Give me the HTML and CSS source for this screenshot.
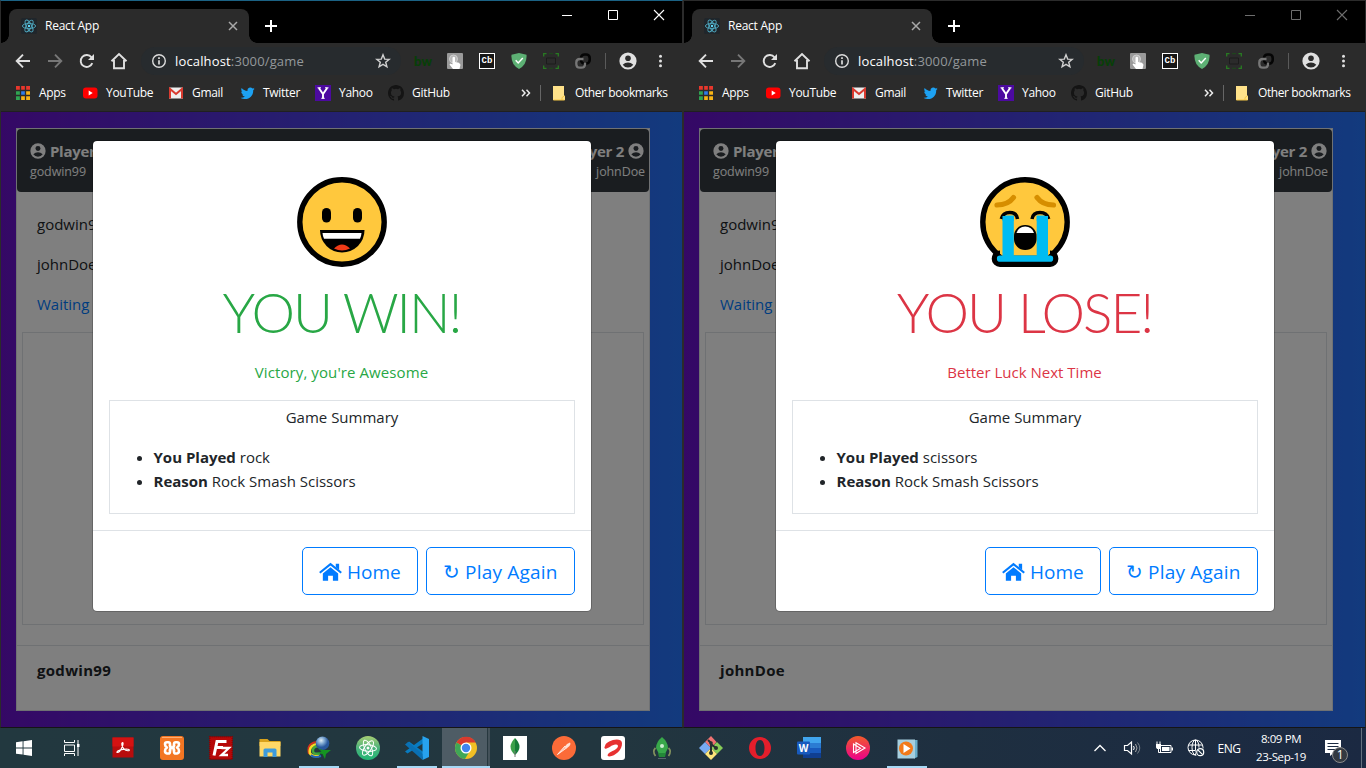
FILE: index.html
```html
<!DOCTYPE html>
<html lang="en">
<head>
<meta charset="utf-8">
<title>React App</title>
<link rel="stylesheet" href="styles.css">
</head>
<body>
<svg class="defs" aria-hidden="true">
  <defs>
    <symbol id="react" viewBox="0 0 16 16"><rect width="16" height="16" rx="1.5" fill="#20262b"/><g fill="none" stroke="#4fa9c0" stroke-width=".9"><ellipse cx="8" cy="8" rx="6.6" ry="2.6"/><ellipse cx="8" cy="8" rx="6.6" ry="2.6" transform="rotate(60 8 8)"/><ellipse cx="8" cy="8" rx="6.6" ry="2.6" transform="rotate(120 8 8)"/></g><circle cx="8" cy="8" r="1.2" fill="#61dafb"/></symbol>
    <symbol id="tabx" viewBox="0 0 16 16"><path d="M4 4l8 8M12 4l-8 8" stroke="#a8a8a8" stroke-width="1.5"/></symbol>
    <symbol id="plus" viewBox="0 0 16 16"><path d="M8 2v12M2 8h12" stroke="#fff" stroke-width="2"/></symbol>
    <symbol id="min" viewBox="0 0 16 16"><path d="M3 8.5h10" stroke="currentColor"/></symbol>
    <symbol id="max" viewBox="0 0 16 16"><path d="M3.5 3.500h9v9h-9z" fill="none" stroke="currentColor"/></symbol>
    <symbol id="close" viewBox="0 0 16 16"><path d="M3 3l10 10M13 3L3 13" stroke="currentColor" stroke-width="1.1"/></symbol>
    <symbol id="back" viewBox="0 0 16 16"><path d="M15 8H2M8 1.700L1.700 8 8 14.300" fill="none" stroke="currentColor" stroke-width="1.9"/></symbol>
    <symbol id="reload" viewBox="0 0 16 16"><path d="M13.300 10.200A6 6 0 1 1 12.500 4.300" fill="none" stroke="#e0e0e0" stroke-width="1.900"/><path d="M15 1v6H9z" fill="#e0e0e0"/></symbol>
    <symbol id="homeo" viewBox="0 0 18 18"><path d="M1.500 9.200L9 2l7.500 7.200M4 8v8.200h10V8" fill="none" stroke="#e0e0e0" stroke-width="1.900"/></symbol>
    <symbol id="info" viewBox="0 0 16 16"><circle cx="8" cy="8" r="6.300" fill="none" stroke="#dcdcdc" stroke-width="1.400"/><path d="M8 7.200v4.300M8 4.200v1.700" stroke="#dcdcdc" stroke-width="1.700"/></symbol>
    <symbol id="star" viewBox="0 0 16 16"><path d="M8 1.800l1.700 4.300 4.500.3-3.500 2.900 1.200 4.500L8 11.300l-3.900 2.500 1.200-4.500L1.800 6.400l4.500-.3z" fill="none" stroke="#d0d0d0" stroke-width="1.400"/></symbol>
    <symbol id="touch" viewBox="0 0 16 16"><rect width="16" height="16" rx="1" fill="#9a9a9a"/><circle cx="6.500" cy="6" r="4" fill="#b9b9b9" stroke="#cfcfcf"/><path d="M5.500 4.500q1.500-1.500 2.500 0V9l4 .8 1.500 2-1 4.200H6L2.500 11.500l1-1 2 1z" fill="#fff"/></symbol>
    <symbol id="shield" viewBox="0 0 16 16"><path d="M8 0l7.500 1.800q.8 9.500-7.500 14.200Q-.3 11.300.5 1.800z" fill="#5db074"/><path d="M4.700 7.200l2.500 2.700L11.800 5" fill="none" stroke="#fff" stroke-width="1.500"/></symbol>
    <symbol id="capture" viewBox="0 0 16 16"><path d="M.7 3.500V.7h2.800M12.500 .7h2.800v2.800M15.300 12.500v2.800h-2.800M3.500 15.300H.7v-2.800" fill="none" stroke="#287b22" stroke-width="1.300"/><path d="M6 .7h4M6 15.300h4" stroke="#1d4a1b" stroke-width="1"/><path d="M3.500 5h9v6h-9z" fill="none" stroke="#1c1c1c"/></symbol>
    <symbol id="link" viewBox="0 0 16 16"><rect x="6" y="1.500" width="8.700" height="9" rx="3.500" fill="none" stroke="#050505" stroke-width="2.600"/><path d="M10 9.500v1.500q0 3.700-3.700 3.700H5Q1.300 14.700 1.300 11V9.500Q1.300 6 5 6h3.500" fill="none" stroke="#777" stroke-width="2.300"/></symbol>
    <symbol id="avatar" viewBox="0 0 18 18"><circle cx="9" cy="9" r="8.600" fill="currentColor"/><circle cx="9" cy="6.200" r="2.800" class="hole"/><path d="M3.700 12.700Q6 10.400 9 10.400t5.300 2.300Q12.500 15.500 9 15.500t-5.300-2.800z" class="hole"/></symbol>
    <symbol id="dots" viewBox="0 0 16 16"><g fill="#e0e0e0"><circle cx="8.500" cy="3.200" r="1.500"/><circle cx="8.500" cy="8" r="1.500"/><circle cx="8.500" cy="12.800" r="1.500"/></g></symbol>
    <symbol id="apps" viewBox="0 0 16 16"><path d="M0 1h4v4H0zM5 1h4v4H5zM10 1h4v4h-4z" fill="#e8372c"/><path d="M0 6h4v4H0zM0 11h4v4H0z" fill="#2fa552"/><path d="M5 6h4v4H5z" fill="#2f7de8"/><path d="M10 6h4v4h-4zM5 11h4v4H5zM10 11h4v4h-4z" fill="#f8b516"/><path d="M4.500 1v14M9.500 1v14M0 5.500h14M0 10.500h14" stroke="#2b2b2b" stroke-width="1.300"/></symbol>
    <symbol id="youtube" viewBox="0 0 16 16"><rect y="2.500" width="14.500" height="11" rx="3" fill="#f00"/><path d="M5.700 5.500v5l4-2.500z" fill="#fff"/></symbol>
    <symbol id="gmail" viewBox="0 0 16 16"><path d="M0 2.500h14v11H0z" fill="#eee"/><path d="M1 13.500V4l6 5 6-5v9.500" fill="none" stroke="#d93a2f" stroke-width="2"/></symbol>
    <symbol id="twitter" viewBox="0 0 24 24"><path d="M22 5.800c-.8.300-1.600.6-2.500.7.900-.5 1.600-1.400 1.900-2.400-.8.500-1.800.9-2.700 1.100A4.300 4.300 0 0 0 11.300 9C7.700 8.900 4.600 7.200 2.500 4.600c-1.200 2-.5 4.500 1.300 5.700-.7 0-1.400-.2-2-.5 0 2.200 1.500 3.900 3.500 4.300-.6.200-1.300.2-2 .1.600 1.700 2.200 2.900 4 3A8.700 8.700 0 0 1 .9 19c9 5.600 19.300-.5 18.900-11 .9-.6 1.600-1.400 2.200-2.200z" fill="#1da1f2"/></symbol>
    <symbol id="yahoo" viewBox="0 0 16 16"><rect width="16" height="16" fill="#4c0aa0"/><path d="M3.800 3L8 9l4.200-6M8 9v4.500" fill="none" stroke="#fff" stroke-width="1.900"/><path d="M2.500 2.800h3.500M10 2.800h3.500M6.300 13.300h3.400" stroke="#fff"/></symbol>
    <symbol id="github" viewBox="0 0 16 16"><path d="M8 0C3.580 0 0 3.580 0 8c0 3.540 2.290 6.530 5.470 7.590.4.070.55-.17.55-.38v-1.490c-2.010.37-2.530-.49-2.690-.94-.09-.23-.48-.94-.82-1.130-.28-.15-.68-.52-.01-.53.63-.01 1.080.58 1.230.82.72 1.210 1.870.87 2.330.66.07-.52.280-.87.510-1.070-1.780-.2-3.640-.89-3.640-3.950 0-.87.310-1.590.820-2.150-.08-.2-.36-1.020.080-2.120 0 0 .67-.21 2.200.82a7.600 7.600 0 0 1 4 0c1.530-1.040 2.200-.82 2.200-.82.440 1.100.160 1.920.080 2.120.510.560.820 1.270.820 2.150 0 3.070-1.870 3.750-3.650 3.950.290.250.540.730.540 1.480v2.200c0 .210.150.460.550.380A8 8 0 0 0 16 8c0-4.420-3.580-8-8-8z" fill="#141414"/></symbol>
    <symbol id="more" viewBox="0 0 16 16"><path d="M4 4.800l3 3.200-3 3.200M8.500 4.800l3 3.200-3 3.200" fill="none" stroke="#ececec" stroke-width="1.500"/></symbol>
    <symbol id="folder" viewBox="0 0 16 16"><path d="M0 1h11v9.500l1 .5v4H0z" fill="#ffe28a"/><path d="M.4 15h11.200M9 15v-2.500l2.500-1.500" stroke="#f6c744" fill="none"/></symbol>
    <symbol id="fahome" viewBox="0 0 24 20"><path d="M4 11.500L12 5l8 6.500V19h-5.500v-5h-5v5H4z" fill="currentColor"/><path d="M.8 10.800L12 1.800l11.200 9" fill="none" stroke="currentColor" stroke-width="2.200"/><path d="M17.500 1.500H21V8l-3.500-3z" fill="currentColor"/></symbol>
    <symbol id="happy" viewBox="0 0 90 90"><circle cx="45" cy="45" r="42.200" fill="#ffc83d" stroke="#000" stroke-width="5.400"/><rect x="25" y="31" width="9" height="14.500" rx="4.500"/><rect x="56" y="31" width="9" height="14.500" rx="4.500"/><path d="M23 53h44.500q0 9-6.500 16-7 6.500-16 6.500T29.500 69Q23 62 23 53z"/><path d="M25.500 56h39q-.3 3.400-1.500 5.800H27q-1.200-2.400-1.500-5.800z" fill="#fff"/><path d="M37 71.500q8-8 16 0-8 4-16 0z" fill="#f03a17"/></symbol>
    <symbol id="sad" viewBox="0 0 90 90"><circle cx="45" cy="45" r="42.200" fill="#ffc83d" stroke="#000" stroke-width="5.400"/><rect x="14.300" y="76" width="61.500" height="11.400" rx="5.700" fill="#00bcf2" stroke="#000" stroke-width="5.200"/><path d="M20 72h50v4.500l-2 2H22l-2-2z" fill="#ffc83d"/><path d="M22.500 38.500h11.300V78.500h22.900V38.500h11.300V79h2.500a2.500 2.500 0 0 1 0 5H19.500a2.500 2.500 0 0 1 0-5h3z" fill="#00bcf2"/><path d="M17 28q11 0 16.500-7.500M73.500 28Q62.500 28 57 20.500" fill="none" stroke="#d68e00" stroke-width="5.200" stroke-linecap="round"/><path d="M21.300 42q1.500-6.500 8.500-6.500T37.500 42M52 42q1-6.500 8-6.500t8.700 6.500" fill="none" stroke="#000" stroke-width="3.500"/><path d="M22.500 39h11.300v5H22.500zM56.700 39H68v5H56.700z" fill="#00bcf2"/><rect x="34" y="48" width="22.500" height="25" rx="11"/><path d="M36.500 56q2-6.500 8.700-6.500T54 56z" fill="#fff"/></symbol>
  </defs>
</svg>
<div class="desktop">
  <main class="windows">
    <section class="window active">
      <header class="titlebar">
        <div class="tab"><svg class="i16"><use href="#react"/></svg><span class="tab-name">React App</span><svg class="i16"><use href="#tabx"/></svg></div>
        <svg class="i16 newtab"><use href="#plus"/></svg>
        <div class="controls"><svg class="i16"><use href="#min"/></svg><svg class="i16"><use href="#max"/></svg><svg class="i16"><use href="#close"/></svg></div>
      </header>
      <nav class="toolbar">
        <span class="tool"><svg class="i16"><use href="#back"/></svg></span><span class="tool forward"><svg class="i16"><use href="#back"/></svg></span><span class="tool"><svg class="i16"><use href="#reload"/></svg></span><span class="tool"><svg class="i18"><use href="#homeo"/></svg></span>
        <div class="omnibox"><svg class="i16"><use href="#info"/></svg><span class="url">localhost<i>:3000/game</i></span><svg class="i16"><use href="#star"/></svg></div>
        <span class="tool bw">bw</span><span class="tool"><svg class="i16"><use href="#touch"/></svg></span><span class="tool cb">Cb</span><span class="tool"><svg class="i16"><use href="#shield"/></svg></span><span class="tool"><svg class="i16"><use href="#capture"/></svg></span><span class="tool"><svg class="i16"><use href="#link"/></svg></span>
        <span class="rule"></span><span class="tool profile"><svg class="i18"><use href="#avatar"/></svg></span><span class="tool"><svg class="i16"><use href="#dots"/></svg></span>
      </nav>
      <nav class="bookmarks">
        <span class="bm"><svg class="i16"><use href="#apps"/></svg>Apps</span><span class="bm"><svg class="i16"><use href="#youtube"/></svg>YouTube</span><span class="bm"><svg class="i16"><use href="#gmail"/></svg>Gmail</span><span class="bm"><svg class="i16"><use href="#twitter"/></svg>Twitter</span><span class="bm"><svg class="i16"><use href="#yahoo"/></svg>Yahoo</span><span class="bm"><svg class="i16"><use href="#github"/></svg>GitHub</span><span class="bm more"><svg class="i16"><use href="#more"/></svg></span><span class="bm other"><svg class="i16"><use href="#folder"/></svg>Other bookmarks</span>
      </nav>
      <div class="page">
        <div class="game">
          <div class="players"><div class="player"><b><svg class="i16"><use href="#avatar"/></svg> Player 1</b><small>godwin99</small></div><div class="player second"><b>Player 2 <svg class="i16"><use href="#avatar"/></svg></b><small>johnDoe</small></div></div>
          <div class="log"><p>godwin99</p><p>johnDoe</p><p class="wait">Waiting</p></div>
          <div class="board"></div>
          <footer class="me">godwin99</footer>
        </div>
        <div class="backdrop">
          <div class="modal win">
            <div class="modal-body"><svg class="face"><use href="#happy"/></svg><h1>YOU WIN!</h1><p class="verdict">Victory, you're Awesome</p>
              <div class="summary"><p>Game Summary</p><ul><li><b>You Played</b> rock</li><li><b>Reason</b> Rock Smash Scissors</li></ul></div></div>
            <div class="modal-footer"><button class="btn home"><svg class="house"><use href="#fahome"/></svg>Home</button><button class="btn again"><span class="turn">↻</span>Play Again</button></div>
          </div>
        </div>
      </div>
    </section>
    <section class="window">
      <header class="titlebar">
        <div class="tab"><svg class="i16"><use href="#react"/></svg><span class="tab-name">React App</span><svg class="i16"><use href="#tabx"/></svg></div>
        <svg class="i16 newtab"><use href="#plus"/></svg>
        <div class="controls"><svg class="i16"><use href="#min"/></svg><svg class="i16"><use href="#max"/></svg><svg class="i16"><use href="#close"/></svg></div>
      </header>
      <nav class="toolbar">
        <span class="tool"><svg class="i16"><use href="#back"/></svg></span><span class="tool forward"><svg class="i16"><use href="#back"/></svg></span><span class="tool"><svg class="i16"><use href="#reload"/></svg></span><span class="tool"><svg class="i18"><use href="#homeo"/></svg></span>
        <div class="omnibox"><svg class="i16"><use href="#info"/></svg><span class="url">localhost<i>:3000/game</i></span><svg class="i16"><use href="#star"/></svg></div>
        <span class="tool bw">bw</span><span class="tool"><svg class="i16"><use href="#touch"/></svg></span><span class="tool cb">Cb</span><span class="tool"><svg class="i16"><use href="#shield"/></svg></span><span class="tool"><svg class="i16"><use href="#capture"/></svg></span><span class="tool"><svg class="i16"><use href="#link"/></svg></span>
        <span class="rule"></span><span class="tool profile"><svg class="i18"><use href="#avatar"/></svg></span><span class="tool"><svg class="i16"><use href="#dots"/></svg></span>
      </nav>
      <nav class="bookmarks">
        <span class="bm"><svg class="i16"><use href="#apps"/></svg>Apps</span><span class="bm"><svg class="i16"><use href="#youtube"/></svg>YouTube</span><span class="bm"><svg class="i16"><use href="#gmail"/></svg>Gmail</span><span class="bm"><svg class="i16"><use href="#twitter"/></svg>Twitter</span><span class="bm"><svg class="i16"><use href="#yahoo"/></svg>Yahoo</span><span class="bm"><svg class="i16"><use href="#github"/></svg>GitHub</span><span class="bm more"><svg class="i16"><use href="#more"/></svg></span><span class="bm other"><svg class="i16"><use href="#folder"/></svg>Other bookmarks</span>
      </nav>
      <div class="page">
        <div class="game">
          <div class="players"><div class="player"><b><svg class="i16"><use href="#avatar"/></svg> Player 1</b><small>godwin99</small></div><div class="player second"><b>Player 2 <svg class="i16"><use href="#avatar"/></svg></b><small>johnDoe</small></div></div>
          <div class="log"><p>godwin99</p><p>johnDoe</p><p class="wait">Waiting</p></div>
          <div class="board"></div>
          <footer class="me">johnDoe</footer>
        </div>
        <div class="backdrop">
          <div class="modal lose">
            <div class="modal-body"><svg class="face"><use href="#sad"/></svg><h1>YOU LOSE!</h1><p class="verdict">Better Luck Next Time</p>
              <div class="summary"><p>Game Summary</p><ul><li><b>You Played</b> scissors</li><li><b>Reason</b> Rock Smash Scissors</li></ul></div></div>
            <div class="modal-footer"><button class="btn home"><svg class="house"><use href="#fahome"/></svg>Home</button><button class="btn again"><span class="turn">↻</span>Play Again</button></div>
          </div>
        </div>
      </div>
    </section>
  </main>
  <footer class="taskbar">
    <span class="start"><svg class="i16" viewBox="0 0 16 16"><path d="M0 2.200l6.600-.9v6.200H0zM7.500 1.200L16 0v7.500H7.500zM0 8.400h6.600v6.200L0 13.700zM7.500 8.400H16V16l-8.500-1.200z" fill="#fff"/></svg></span>
    <span class="taskview"><svg class="i16" viewBox="0 0 16 16"><path d="M.5 0v2.500h10V0M.5 5h10v6.500H.500zM.5 16v-2.500h10V16M14 0v16" fill="none" stroke="#fff"/><path d="M13 4h2.500v3H13z" fill="#fff"/></svg></span>
    <span class="app"><svg class="i24" viewBox="0 0 24 24"><rect x="1.500" y="1.500" width="21" height="20" fill="#b80d0d"/><path d="M1.500 1.500h21v9h-21z" fill="#d41212"/><path d="M6 16.500c-.5-2 9-4.500 12-3 1.500 2-3 1.500-5-.5s-3-6-1.500-6.500c2 0-2 10.500-5.500 10z" fill="none" stroke="#fff" stroke-width="1.200"/></svg></span>
    <span class="app"><svg class="i24" viewBox="0 0 24 24"><rect width="24" height="24" rx="3" fill="#f37623"/><path d="M2 1.500h20" stroke="#ffae72"/><g fill="none" stroke="#fff" stroke-width="2.600" stroke-linejoin="round" stroke-linecap="round"><path d="M10 9.500V8Q10 6.300 8.300 6.300H7Q5 6.300 5 8.300t2 3.200Q5 12.800 5 15t2 2.500h1.300q1.700 0 1.700-1.800v-1.500"/><path d="M14 9.500V8q0-1.700 1.700-1.700H17q2 0 2 2t-2 3.200q2 1.300 2 3.500t-2 2.500h-1.300q-1.700 0-1.700-1.800v-1.500"/><path d="M10 9.500q0 2 2 2t2-2M10 14.200q0-2.200 2-2.200t2 2.200"/></g></svg></span>
    <span class="app"><svg class="i24" viewBox="0 0 24 24"><rect x=".7" y=".7" width="22.600" height="22.600" fill="#b60808" stroke="#8a0000" stroke-width="1.400" stroke-dasharray="1 1"/><path d="M5 19.500L8 5.500h9.500M7 11.500h7" fill="none" stroke="#fff" stroke-width="3"/><path d="M12.500 12H20L12.500 19H19" fill="none" stroke="#fff" stroke-width="2.300"/></svg></span>
    <span class="app"><svg class="i24" viewBox="0 0 24 24"><path d="M1.500 3h8l2 2h11v5h-21z" fill="#d9a21b"/><path d="M1.500 6h21v14.500h-21z" fill="#ffd867"/><path d="M5.500 21v-7q0-1.500 1.500-1.500h10q1.500 0 1.500 1.500v7h-4v-4.500h-5V21z" fill="#3d9bdc"/></svg></span>
    <span class="app open"><svg class="i24" viewBox="0 0 24 24"><defs><radialGradient id="globe" cx=".4" cy=".3"><stop stop-color="#e2eef5"/><stop offset=".5" stop-color="#7ca6d0"/><stop offset="1" stop-color="#28579c"/></radialGradient></defs><g fill="none"><path d="M2 18Q-1 6 12 6" stroke="#d4331c" stroke-width="2"/><path d="M12 20Q0 21 3.500 12 6 8 12 8" stroke="#f4dc28" stroke-width="2.500"/><path d="M13 17.500Q5 19 6 13.500 7 10 12 10" stroke="#42a63c" stroke-width="2.500"/><path d="M4 19q3 3.500 10 1" stroke="#2365b6" stroke-width="2"/></g><circle cx="15.500" cy="7.200" r="6.800" fill="url(#globe)"/><path d="M11 12.500l5 1.500h8l-5 4-1 5-2.500-5-6-1 5-1.500z" fill="#159421"/></svg></span>
    <span class="app"><svg class="i24" viewBox="0 0 24 24"><defs><linearGradient id="atom" x2="0" y2="1"><stop stop-color="#a8cf74"/><stop offset=".5" stop-color="#4cb37c"/><stop offset="1" stop-color="#20b573"/></linearGradient></defs><circle cx="12" cy="12" r="12" fill="url(#atom)"/><g fill="none" stroke="#fff"><ellipse cx="12" cy="12" rx="8.500" ry="3.300" transform="rotate(5 12 12)"/><ellipse cx="12" cy="12" rx="8.500" ry="3.300" transform="rotate(65 12 12)"/><ellipse cx="12" cy="12" rx="8.500" ry="3.300" transform="rotate(125 12 12)"/></g><circle cx="12" cy="12" r="1.500" fill="#fff"/></svg></span>
    <span class="app open"><svg class="i24" viewBox="0 0 24 24"><path d="M2 7.500L18 21l.5-5L4 5.500zM0 15.500l2.500 2L18 7.500V2.500z" fill="#087bc0"/><path d="M17.500 0L24 3v18l-6.500 3z" fill="#27a3ef"/><path d="M0 8.500l3-2.500 14.500 12V24z" fill="#0a70b3"/></svg></span>
    <span class="app current"><svg class="i24" viewBox="0 0 24 24"><circle cx="12" cy="12" r="11" fill="#f2bf24"/><path d="M12 12L2.500 6.500a11 11 0 0 1 19.300 0H12z" fill="#d93a2e"/><path d="M12 12L2.500 6.500A11 11 0 0 0 11 23l5-8.500z" fill="#3fa757"/><circle cx="12" cy="12" r="5.500" fill="#fff"/><circle cx="12" cy="12" r="4.200" fill="#4185ef"/></svg></span>
    <span class="app"><svg class="i24" viewBox="0 0 24 24"><path d="M0 0h24v24H0z" fill="#fff"/><path d="M12 2q-9 9 0 17z" fill="#3aa04a"/><path d="M12 2q9 9 0 17z" fill="#157c38"/><path d="M12 15v6" stroke="#777"/></svg></span>
    <span class="app"><svg class="i24" viewBox="0 0 24 24"><circle cx="12" cy="12" r="12" fill="#fb6b38"/><path d="M5.500 18.500L13 10l1.800 1.800z" fill="#ffb89c" stroke="#fff" stroke-width=".8"/><path d="M12.500 11l2.500-3 2-1 1-.5.500 1.500-1 2-3 2.500z" fill="#ffe2d6"/></svg></span>
    <span class="app"><svg class="i24" viewBox="0 0 24 24"><rect width="24" height="24" rx="3" fill="#fff"/><path d="M4 10C4.500 5 20 0 21 7c.5 7-7 13-12.500 13.500-4-.5-1-4 3-5.500 5-2 7.500-6 3.500-6.500C11 8 6 14 4 12.500 3 12 3.500 11 4 10z" fill="#e73131"/></svg></span>
    <span class="app"><svg class="i24" viewBox="0 0 24 24"><path d="M5.500 12Q2 15 5.500 20M18.500 12q3.500 3 0 8" fill="none" stroke="#83925e" stroke-width="1.700"/><path d="M12 1q-6 5-6 11l3 6h6l3-6q0-6-6-11z" fill="#38a84a"/><path d="M8 17h8l-1 4H9z" fill="#238738"/><circle cx="12" cy="10" r="2" fill="#cbeed0"/><path d="M8 22.500h8" stroke="#56666b"/></svg></span>
    <span class="app"><svg class="i24" viewBox="0 0 24 24"><path d="M12 0l5.500 6-5.500 6-6-6z" fill="#f07272"/><path d="M18 6l6 6-6 6-6-6z" fill="#86cc58"/><path d="M6 6l6 6-6 6-6-6z" fill="#77aaf2"/><path d="M12 12l6 6-6 6-6-6z" fill="#ffe57b"/><path d="M9 4l3 3v11M12 8l5 4" fill="none" stroke="#26302f" stroke-width="2"/><circle cx="12" cy="7" r="1.800" fill="#26302f"/><circle cx="17" cy="12" r="2" fill="#26302f"/><circle cx="12" cy="17" r="2" fill="#26302f"/></svg></span>
    <span class="app"><svg class="i24" viewBox="0 0 24 24"><path fill-rule="evenodd" d="M12 1a11 11 0 1 0 0 22 11 11 0 0 0 0-22zm0 3c3 0 4.500 3.500 4.500 8s-1.500 8-4.500 8-4.500-3.500-4.500-8 1.500-8 4.500-8z" fill="#e41e2b"/></svg></span>
    <span class="app word"><svg class="i24" viewBox="0 0 24 24"><path d="M6 1h18v7H6z" fill="#41a5ee"/><path d="M6 7h18v5H6z" fill="#2b7cd3"/><path d="M6 12h18v5H6z" fill="#185abd"/><path d="M6 17h18v5H6z" fill="#103f91"/><rect y="5.500" width="13" height="13" rx="1" fill="#185abd"/><text x="6.500" y="16" text-anchor="middle">W</text></svg></span>
    <span class="app"><svg class="i24" viewBox="0 0 24 24"><defs><linearGradient id="ps" x2="0" y2="1"><stop stop-color="#f15b2a"/><stop offset="1" stop-color="#ec008c"/></linearGradient></defs><circle cx="12" cy="12" r="12" fill="url(#ps)"/><path d="M7.500 8v8.500l7-4.200zM10 6.800v10.700L19 12z" fill="none" stroke="#fff" stroke-width="1.100"/></svg></span>
    <span class="app open"><svg class="i24" viewBox="0 0 24 24"><path d="M19 4h3.500v17l-3.500 1.500z" fill="#69aeca"/><path d="M2.500 3.500H20v19H2.500z" fill="#a6cfdf"/><circle cx="11" cy="12.500" r="7" fill="#f27a1a"/><path d="M8.500 8v9l7-4.500z" fill="#fff"/></svg></span>
    <div class="tray">
      <span class="t chev"><svg class="i16" viewBox="0 0 16 16"><path d="M2.500 11L8 5.500l5.500 5.500" fill="none" stroke="#fff" stroke-width="1.300"/></svg></span>
      <span class="t vol"><svg class="i18" viewBox="0 0 18 18"><path d="M1.500 6.500h3L8.500 3v12l-4-3.500h-3z" fill="none" stroke="#fff" stroke-width="1.200"/><path d="M10.500 7q1.500 2 0 4" fill="none" stroke="#fff"/><path d="M12.500 5q3 4 0 8" fill="none" stroke="#aaa"/><path d="M14.500 3.500q4.500 5.500 0 11" fill="none" stroke="#78828b"/></svg></span>
      <span class="t"><svg class="i18" viewBox="0 0 18 18"><path d="M5.500 6.500H16v7H5.500z" fill="none" stroke="#fff"/><path d="M7 8h7.500v4H7zM16.500 8.500H18v3h-1.500zM1 5h5v3.500L5 10H2L1 8.500z" fill="#fff"/><path d="M2 2.500V5M5 2.500V5M3.500 9v4.500H6" fill="none" stroke="#fff"/></svg></span>
      <span class="t"><svg class="i18" viewBox="0 0 18 18"><g fill="none" stroke="#fff"><circle cx="8.500" cy="8.500" r="7.500"/><ellipse cx="8.500" cy="8.500" rx="3.500" ry="7.500"/><path d="M1.500 6h14M1.500 11.500H10M8.500 1v15"/></g><circle cx="13.200" cy="13.200" r="4.800" fill="#1d3044"/><g fill="none" stroke="#fff" stroke-width="1.200"><circle cx="13.200" cy="13.200" r="3.500"/><path d="M10.800 10.800l4.800 4.800"/></g></svg></span>
      <span class="lang">ENG</span>
      <span class="clock"><span>8:09 PM</span><span>23-Sep-19</span></span>
      <span class="action"><svg class="i16" viewBox="0 0 16 16"><path d="M0 0h16v13H8.500l-3.500 3v-3H0z" fill="#fff"/><path d="M2.500 3.500h11M2.500 6.500h11M2.500 9.500h8" stroke="#1c2b42"/></svg><span class="count">1</span></span>
    </div>
  </footer>
</div>
</body>
</html>
```
FILE: styles.css
```css
* { box-sizing: border-box; }
body { margin: 0; width: 1366px; height: 768px; overflow: hidden; font-family: "Open Sans", "Noto Sans", sans-serif; }
p, h1, ul { margin: 0; padding: 0; }
svg { display: block; flex: none; }
.defs { position: absolute; width: 0; height: 0; }
.i16 { width: 16px; height: 16px; }
.i18 { width: 18px; height: 18px; }
.i24 { width: 24px; height: 24px; }
.hole { fill: var(--hole); }
.desktop { height: 768px; display: flex; flex-direction: column; background: #111; }
.windows { display: flex; height: 728px; }
.window { width: 683px; height: 728px; display: flex; flex-direction: column; border: 1px solid #2b2b2b; border-bottom-color: #151515; background: #2b2b2b; --hole: #2b2b2b; color: #fff; }
.window.active { border-top-color: #1b6284; }
.titlebar { height: 42px; background: #000; display: flex; padding-left: 8px; color: #6e6e6e; }
.active .titlebar { color: #fff; }
.tab { width: 240px; height: 34px; margin-top: 8px; padding: 0 8px 0 12px; display: flex; align-items: center; background: #2b2b2b; border-radius: 8px 8px 0 0; color: #fff; }
.tab::before, .tab::after { content: ""; align-self: flex-end; width: 8px; height: 8px; flex: none; }
.tab::before { margin-left: -20px; margin-right: 12px; background: radial-gradient(circle at 0 0, #000 7.5px, #2b2b2b 8px); }
.tab::after { margin-right: -16px; margin-left: 8px; background: radial-gradient(circle at 100% 0, #000 7.5px, #2b2b2b 8px); }
.tab-name { flex: 1; padding-left: 8px; margin-top: -2px; font-size: 12px; letter-spacing: -.25px; }
.newtab { margin: 17px 0 0 14px; }
.controls { margin-left: auto; display: flex; gap: 30px; padding: 6px 15px 0 0; }
.toolbar { height: 36px; padding-left: 6px; display: flex; align-items: center; }
.tool { width: 32px; height: 36px; flex: none; display: flex; align-items: center; justify-content: center; color: #e0e0e0; }
.forward { color: #777; }
.forward svg { transform: scaleX(-1); }
.omnibox { width: 260px; height: 28px; margin: 0 6px; padding: 0 10px; display: flex; align-items: center; gap: 8px; background: #272b2e; border-radius: 14px; }
.url { flex: 1; font-size: 13px; letter-spacing: .15px; }
.url i { font-style: normal; color: #94989b; }
.bw { color: #073f07; font: 900 13px Lato, sans-serif; }
.cb { width: 16px; height: 16px; margin: 0 8px; border: 1px solid #fff; background: #161616; color: #fff; font: 700 9px "Liberation Mono", monospace; }
.rule { width: 1px; height: 16px; background: #5a5a5a; margin: 0 6px; }
.bookmarks { height: 33px; padding: 0 0 5px 15px; display: flex; align-items: center; border-bottom: 1px solid #202020; }
.bm { display: flex; align-items: center; gap: 7px; width: 67px; font-size: 12px; letter-spacing: -.3px; white-space: nowrap; flex: none; }
.bm:nth-child(2) { width: 86px; }
.bm:nth-child(3) { width: 71px; }
.bm:nth-child(4) { width: 75px; }
.bm:nth-child(5) { width: 73px; gap: 8px; }
.bm:nth-child(6) { width: 130px; gap: 8px; }
.bm.more { width: 22px; }
.bm.other { width: 130px; height: 16px; padding-left: 12px; gap: 6px; letter-spacing: -.4px; border-left: 1px solid #666; }
.page { height: 615px; padding: 16px 0 0 15px; position: relative; background: linear-gradient(to right, #6a11cb, #2575fc); color: #212529; }
.game { width: 634px; height: 583px; background: #fff; border: 1px solid #dee2e6; display: flex; flex-direction: column; }
.players { height: 63px; background: #343a40; border-radius: 4px; color: #fff; --hole: #343a40; display: flex; justify-content: space-between; padding: 11px 4px 0 13px; }
.player { display: flex; flex-direction: column; font-size: 15px; line-height: 22px; }
.player b { display: flex; gap: 4px; align-items: center; font-weight: 700; letter-spacing: -.3px; }
.player small { font-size: 12.5px; line-height: 20px; letter-spacing: -.1px; }
.second { align-items: flex-end; }
.second b { padding-right: 1px; }
.log { height: 140px; padding: 20px 20px 0; font-size: 15px; line-height: 24px; }
.log p { margin-bottom: 16px; }
.wait { color: #007bff; }
.board { height: 293px; margin: 0 5px; border: 1px solid #dee2e6; }
.me { flex: 1; margin-top: 20px; padding: 12px 20px; border-top: 1px solid #dee2e6; font: 700 15px/24px "Open Sans", sans-serif; letter-spacing: .3px; }
.backdrop { position: absolute; inset: 0; background: rgba(0,0,0,.5); padding: 28px 0 0 91px; }
.modal { width: 500px; height: 472px; border: 1px solid rgba(0,0,0,.2); background: #fff; background-clip: padding-box; border-radius: 5px; display: flex; flex-direction: column; font-size: 15px; line-height: 24px; }
.modal-body { height: 389px; padding: 36px 17px 0 16px; display: flex; flex-direction: column; align-items: center; }
.face { width: 90px; height: 90px; }
h1 { margin-top: 12px; font: 300 55px/67px Lato, sans-serif; letter-spacing: -2px; white-space: nowrap; }
.verdict { margin-top: 14px; }
.win .verdict { letter-spacing: .1px; }
.win h1, .win .verdict { color: #28a745; }
.lose h1, .lose .verdict { color: #dc3545; }
.summary { width: 466px; height: 114px; margin-top: 16px; padding-top: 4px; border: 1px solid #dee2e6; align-self: flex-start; }
.summary p { text-align: center; }
.summary ul { margin-top: 16px; padding-left: 43.500px; }
.summary b { font-weight: 700; }
.modal-footer { flex: 1; border-top: 1px solid #dee2e6; padding: 16px; display: flex; justify-content: flex-end; gap: 8px; }
.btn { height: 48px; padding: 1px 16px 0; border: 1px solid #007bff; border-radius: 5px; background: #fff; color: #007bff; font: 400 19px/28px "Open Sans", sans-serif; display: flex; align-items: center; gap: 5px; white-space: nowrap; }
.home { width: 116px; }
.again { width: 149px; letter-spacing: .2px; }
.house { width: 23px; height: 20px; }
.turn { width: 17px; font: 20px "DejaVu Sans", sans-serif; }
.taskbar { height: 40px; display: flex; background: linear-gradient(90deg, #22383f, #22363f 45%, #1e2f40 70%, #1b2942); color: #fff; }
.start, .taskview, .app, .t { display: flex; align-items: center; justify-content: center; flex: none; height: 40px; }
.start { width: 48px; }
.taskview { width: 50px; padding-right: 2px; }
.app { width: 49px; }
.app.open { border: solid #a6d8f5; border-width: 0 0 2px; padding-top: 2px; width: 40px; margin: 0 4px 0 5px; }
.app.open svg { margin-left: -1px; }
.app.current { width: 48px; margin: 0 0 0 1px; padding: 2px 1px 0 0; border-bottom: 2px solid #a6d8f5; background: linear-gradient(90deg, #4e5c65 45px, #27383f 45px, #27383f 46px, #44525a 46px); }
.word text { fill: #fff; font: 700 10px "Open Sans", sans-serif; }
.tray { margin-left: auto; width: 282px; display: flex; align-items: center; font-size: 12px; letter-spacing: -.4px; }
.t { width: 32px; }
.lang { width: 34px; text-align: center; }
.clock { width: 70px; display: flex; flex-direction: column; align-items: center; line-height: 18px; font-size: 11.500px; }
.action { position: relative; height: 40px; padding: 12px 0 0 9px; flex: 1; margin-right: 4px; border-right: 1px solid #63707e; }
.count { position: absolute; left: 16px; top: 19px; width: 16px; height: 16px; border: 1px solid #8b8b8b; border-radius: 50%; background: #333941; text-align: center; font-size: 12px; line-height: 14px; }
```
